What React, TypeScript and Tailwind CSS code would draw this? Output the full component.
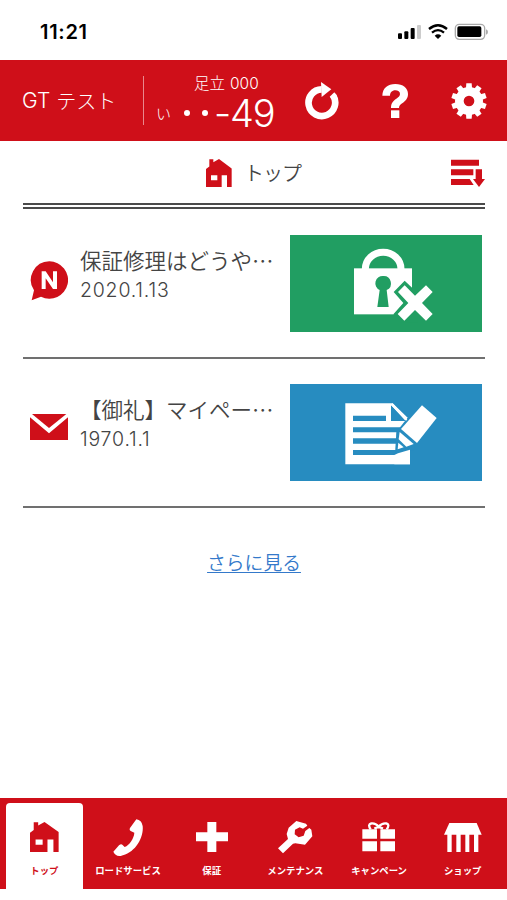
import type { ReactNode } from 'react';

const RED = '#cf0f19';

function HouseIcon({ width, height }: { width: number; height: number }) {
  return (
    <svg width={width} height={height} viewBox="0 0 78 86" fill={RED} preserveAspectRatio="none">
      <path fillRule="evenodd" d="M10 1H22V10L39 0L77 29V86H63V50H47V86H0V31L10 23ZM15 50V65H34V50Z" />
    </svg>
  );
}

function StatusIcons() {
  return (
    <svg width="92" height="18" viewBox="428 69 276 54">
      <rect x="431" y="100" width="12" height="17" rx="3" />
      <rect x="450" y="94" width="12" height="23" rx="3" />
      <rect x="469" y="84" width="12" height="33" rx="3" />
      <rect x="488" y="75" width="12" height="42" rx="3" fill="#ccc" />
      <g fill="none" stroke="#000" strokeWidth="7">
        <path d="M524 87Q551 64 578 87" />
        <path d="M533 98Q551 83 569 98" />
      </g>
      <path d="M541 107Q551 99 561 107L551 117Z" />
      <rect x="603" y="73" width="88" height="45" rx="12" fill="none" stroke="#aaa" strokeWidth="4" />
      <rect x="609" y="79" width="72" height="32" rx="5" />
      <path d="M695 88Q701 90 701 96T695 104Z" fill="#aaa" />
    </svg>
  );
}

function ReloadIcon() {
  return (
    <svg width="34" height="38" viewBox="154 244 102 114">
      <path d="M204 266A40 40 0 1 0 238 284" fill="none" stroke="#fff" strokeWidth="20" />
      <path d="M202 244L233 266L204 289Z" fill="#fff" />
      <path d="M228 288L242 275L250 286L236 296Z" fill="#fff" />
    </svg>
  );
}

function QuestionIcon() {
  return (
    <svg width="26" height="36" viewBox="384 251 78 108" fill="#fff">
      <path d="M385 289C386 266 401 254 424 254C447 254 462 266 462 284C462 297 455 304 447 310C438 316 435 318 435 326H411C411 311 417 305 427 298C434 293 438 290 438 284C438 277 432 273 424 273C414 273 408 280 408 289Z" />
      <rect x="411" y="333" width="25" height="23" />
    </svg>
  );
}

const TEETH = [0, 36, 72, 108, 144, 180, 216, 252, 288, 324];

function GearIcon() {
  return (
    <svg width="36" height="36" viewBox="-54 -54 108 108">
      <circle r="29" fill="none" stroke="#fff" strokeWidth="26" />
      {TEETH.map((a) => (
        <path key={a} d="M-9 -39L-8 -53H8L9 -39Z" fill="#fff" transform={`rotate(${a})`} />
      ))}
    </svg>
  );
}

function SortIcon() {
  return (
    <svg width="34" height="28" viewBox="814 59 102 84" fill={RED}>
      <path d="M814 61H898V79H814ZM814 90H881V108H814ZM814 119H870L882 137H814Z" />
      <path d="M888 90H907V119H916L898 143L880 119H888Z" />
    </svg>
  );
}

function NewsIcon() {
  return (
    <svg width="38" height="40" viewBox="90 108 114 120">
      <path d="M148 109A56 56 0 1 1 123 215L95 226L102 196A56 56 0 0 1 148 109Z" fill={RED} />
      <path d="M125 192V139H137L159 172V139H171V192H159L137 160V192Z" fill="#fff" />
    </svg>
  );
}

function MailIcon() {
  return (
    <svg width="38" height="28" viewBox="91 113 114 84" fill={RED}>
      <path d="M97 116H200L148 158Z" />
      <path d="M91 126L148 174L205 126V194H91Z" />
    </svg>
  );
}

function LockArt() {
  return (
    <svg className="block" width="192" height="97" viewBox="17 28 576 291">
      <path d="M243 134V130A53 50 0 0 1 350 130V134" fill="none" stroke="#fff" strokeWidth="21" />
      <rect x="209" y="128" width="174" height="138" fill="#fff" />
      <path d="M297 151A22 22 0 0 1 307 193L313 244H279L286 193A22 22 0 0 1 297 151Z" fill="#219e62" />
      <path d="M328 199L361 165L384 187H400V290H350L327 266L357 232Z" fill="#219e62" />
      <path d="M341 199L361 179L392 210L425 179L445 199L413 232L445 265L425 285L392 253L360 285L340 265L372 232Z" fill="#fff" />
    </svg>
  );
}

function NoteArt() {
  return (
    <svg className="block" width="192" height="97" viewBox="17 28 576 291">
      <path d="M183 86H325L377 136V269H183Z" fill="#fff" />
      <path d="M320 91L364 139H320ZM206 123H305V139H206ZM206 158H360V173H206ZM206 191H350V207H206ZM206 226H345V241H206Z" fill="#278cc0" />
      <path d="M369 130H390V225L332 240L336 172Z" fill="#278cc0" />
      <path d="M325 86L369 133L366 138L319 90Z" fill="#fff" />
      <path d="M413 92L457 130L398 205L350 163Z" fill="#fff" />
      <path d="M346 172L388 208L366 216L343 194Z" fill="#fff" />
      <path d="M342 204L358 218L340 224Z" fill="#fff" />
      <path d="M341 236L377 225V269H330V241Z" fill="#fff" />
    </svg>
  );
}

function PhoneIcon() {
  return (
    <svg width="30" height="37" viewBox="341 80 90 111">
      <path d="M411 81Q427 83 430 101C434 139 405 184 364 191Q348 192 342 178L359 159Q365 154 369 157L376 164C391 158 404 138 405 121L394 116Q389 113 392 107Z" fill="#fff" />
    </svg>
  );
}

function PlusIcon() {
  return (
    <svg width="32" height="30" viewBox="590 95 96 90" fill="#fff">
      <path d="M624 95H651V126H686V153H651V185H624V153H590V126H624Z" />
    </svg>
  );
}

function WrenchIcon() {
  return (
    <svg width="35" height="33" viewBox="76 90 105 99" fill="#fff">
      <path d="M131 90L160 98L164 104L151 113L141 109L127 116L126 130L138 139L153 134L158 120L170 111L176 116L179 136L157 161L128 157L121 158L91 187L76 172L106 144L102 129L108 110Z" />
    </svg>
  );
}

function GiftIcon() {
  return (
    <svg width="34" height="30" viewBox="327 95 102 90" fill="#fff">
      <path d="M328 117H372V145H328ZM382 117H426V145H382ZM328 153H372V183H328ZM382 153H426V183H382Z" />
      <path d="M353 117C338 96 364 94 377 109C391 94 417 96 401 117M364 115L377 109L390 115" fill="none" stroke="#fff" strokeWidth="7" />
    </svg>
  );
}

function ShopIcon() {
  return (
    <svg width="38" height="31" viewBox="571 98 114 93" fill="#fff">
      <path d="M587 101H669L684 136H571Z" />
      <path d="M581 134H594V188H581ZM608 134H621V188H608ZM635 134H647V188H635ZM661 134H674V188H661Z" />
    </svg>
  );
}

interface NewsItem {
  icon: ReactNode;
  title: string;
  date: string;
  art: ReactNode;
  bg: string;
}

const news: NewsItem[] = [
  { icon: <NewsIcon />, title: '保証修理はどうや…', date: '2020.1.13', art: <LockArt />, bg: 'bg-[#219e62]' },
  { icon: <div className="-mt-[6px]"><MailIcon /></div>, title: '【御礼】マイペー…', date: '1970.1.1', art: <NoteArt />, bg: 'bg-[#278cc0]' },
];

const tabs = [
  { label: 'トップ', icon: <HouseIcon width={29} height={30} /> },
  { label: 'ロードサービス', icon: <PhoneIcon /> },
  { label: '保証', icon: <PlusIcon /> },
  { label: 'メンテナンス', icon: <WrenchIcon /> },
  { label: 'キャンペーン', icon: <GiftIcon /> },
  { label: 'ショップ', icon: <ShopIcon /> },
];

export default function App() {
  return (
    <div lang="ja" className="flex h-[900px] w-[507px] flex-col overflow-hidden bg-white font-['Inter','Noto_Sans_CJK_JP',sans-serif] text-[#444]">
      <div className="flex h-[60px] shrink-0 items-start justify-between pt-[23px] pr-[18px] pl-[40px]">
        <span className="text-[20px] leading-[18px] font-semibold tracking-[0.7px] text-black">11:21</span>
        <StatusIcons />
      </div>

      <header className="flex h-[81px] shrink-0 items-center bg-[#cf0f19] text-white">
        <div className="flex h-[49px] w-[144px] items-center border-r border-[#e9888d] pl-[22px] text-[20px] whitespace-pre">
          <span className="pt-px text-[21px] font-light">GT</span>
          <span className="pt-px pl-[6px] font-['Noto_Sans_CJK_JP',sans-serif] font-light">テスト</span>
        </div>
        <div className="flex h-full w-[160.5px] flex-col pt-[16px]">
          <div className="pl-[50px] font-['Liberation_Sans','Noto_Sans_CJK_JP',sans-serif] text-[15.5px] leading-[16px] whitespace-nowrap">
            <span className="font-light">足立</span>
            <span className="pl-[5px] font-['Inter',sans-serif] font-light">000</span>
          </div>
          <div className="flex h-[42px] items-center pl-[12px]">
            <span className="w-[26px] text-[15px] leading-none font-light">い</span>
            <span className="flex w-[32px] gap-[12px] pl-[2px]">
              <i className="size-[6px] rounded-full bg-white" />
              <i className="size-[6px] rounded-full bg-white" />
            </span>
            <span className="text-[38px] leading-[36px] font-light tracking-[-1.2px]">-49</span>
          </div>
        </div>
        <div className="flex items-center">
          <ReloadIcon />
          <div className="pl-[43px]"><QuestionIcon /></div>
          <div className="pl-[43px]"><GearIcon /></div>
        </div>
      </header>

      <main className="flex flex-1 flex-col pr-[22px] pl-[23px]">
        <div className="flex h-[68px] shrink-0 items-center border-b-[6px] border-double border-[#4a4a4a] pt-[2px] pl-[183px]">
          <HouseIcon width={26} height={28} />
          <span className="pt-px pl-[12px] text-[20px] leading-none font-[350] tracking-[-1px]">トップ</span>
          <div className="ml-auto"><SortIcon /></div>
        </div>

        {news.map((n) => (
          <article key={n.date} className="flex h-[149.6px] shrink-0 items-start border-b-2 border-[#707070] pt-[25.5px]">
            <div className="flex h-[92px] w-[57px] items-center pl-[7px]">{n.icon}</div>
            <div className="w-[210.4px] pt-[10px] whitespace-nowrap">
              <h2 className="font-['Noto_Sans_CJK_JP',sans-serif] text-[21.5px] leading-[30px] font-[350]">{n.title}</h2>
              <p className="text-[19.5px] leading-[30px] font-light tracking-[0.8px]">{n.date}</p>
            </div>
            <div className={'h-[97px] w-[191.6px] shrink-0 ' + n.bg}>{n.art}</div>
          </article>
        ))}

        <a className="mt-[42px] self-center text-[18.8px] leading-[28px] font-[350] text-[#3479ca] underline underline-offset-[2px]">さらに見る</a>
      </main>

      <nav className="mb-[11.5px] flex h-[90.5px] shrink-0 bg-[#cf0f19] px-[2.5px] pt-[5px]">
        {tabs.map((t, i) => (
          <div key={t.label} className="flex flex-1 justify-center">
            <div className={i === 0 ? 'flex w-[77px] flex-col items-center rounded-t-[4px] bg-white text-[#cf0f19]' : 'flex w-[77px] flex-col items-center text-white'}>
              <div className="flex h-[60px] items-center pt-[8px]">{t.icon}</div>
              <span className="text-[9.4px] leading-[16px] font-bold whitespace-nowrap">{t.label}</span>
            </div>
          </div>
        ))}
      </nav>
    </div>
  );
}
